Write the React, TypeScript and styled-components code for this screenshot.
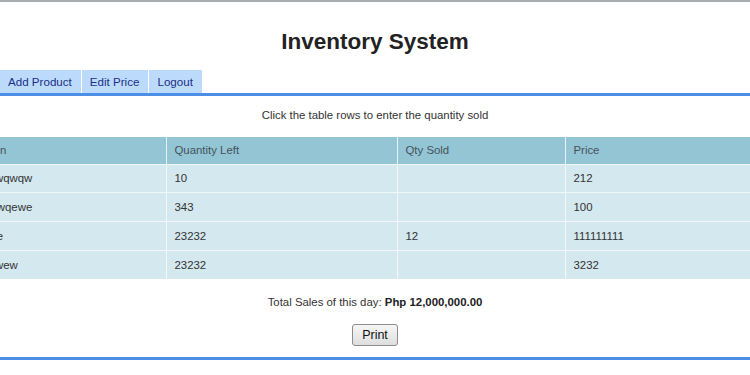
import styled, { createGlobalStyle } from "styled-components";

const GlobalStyle = createGlobalStyle`
  body {
    margin: 0;
    background: #fff;
    font-family: "Liberation Sans", Arial, sans-serif;
    color: #333;
    overflow: hidden;
  }
`;

const Page = styled.div`
  border-top: 2px solid #a9adb0;
  width: 750px;
  overflow: hidden;
`;

const Title = styled.h1`
  margin: 0;
  padding-top: 27px;
  font-size: 22.5px;
  line-height: 26px;
  font-weight: bold;
  text-align: center;
  color: #222;
`;

const Tabs = styled.nav`
  display: flex;
  gap: 1px;
  margin-top: 15px;
`;

const Tab = styled.a`
  display: block;
  padding: 0 9px 0 8px;
  height: 23px;
  line-height: 23px;
  background: #bcdbfc;
  color: #1b2f86;
  font-size: 11.6px;
  text-decoration: none;
  cursor: pointer;
`;

const Content = styled.section`
  border-top: 3px solid #4d8fe6;
  border-bottom: 3px solid #4d8fe6;
  padding: 12px 0 11px;
  text-align: center;
`;

const Note = styled.p`
  margin: 0;
  font-size: 11.4px;
  line-height: 14px;
  color: #333;
`;

const TableWrap = styled.div`
  margin-top: 15px;
  overflow: hidden;
`;

const Table = styled.table`
  margin-left: -84px;
  width: 900px;
  border-collapse: collapse;
  table-layout: fixed;
  font-size: 11.4px;
  text-align: left;
`;

const HeadCell = styled.th<{ $w?: number }>`
  box-sizing: border-box;
  width: ${(p) => (p.$w ? `${p.$w}px` : "auto")};
  height: 27px;
  padding: 0 8px;
  background: #93c5d5;
  color: #45535b;
  font-weight: normal;
  border-left: 1px solid #e6f2f6;
  white-space: nowrap;
  &:first-child {
    border-left: none;
  }
`;

const Row = styled.tr`
  cursor: pointer;
  border-top: 1px solid #f2f8fa;
`;

const Cell = styled.td`
  box-sizing: border-box;
  height: 28.7px;
  padding: 0 8px;
  background: #d4e8ef;
  color: #333;
  border-left: 1px solid #f2f8fa;
  white-space: nowrap;
  overflow: hidden;
  &:first-child {
    border-left: none;
  }
`;

const Total = styled.p`
  margin: 16px 0 0;
  font-size: 11.4px;
  line-height: 14px;
  color: #333;
  b {
    color: #222;
  }
`;

const PrintButton = styled.button`
  margin-top: 15px;
  height: 22px;
  width: 46px;
  padding: 0;
  font-family: "Liberation Sans", Arial, sans-serif;
  font-size: 12.5px;
  color: #111;
  border: 1px solid #8c8c8c;
  border-radius: 3px;
  background: linear-gradient(#f6f6f6, #dedede);
  cursor: pointer;
`;

const rows = [
  { name: "eqwqwqwqwqwqwqw", left: "10", sold: "", price: "212" },
  { name: "weqwqwqwqwwqewe", left: "343", sold: "", price: "100" },
  { name: "wqwqwqwqwqe", left: "23232", sold: "12", price: "111111111" },
  { name: "qeqwqwqwqwwew", left: "23232", sold: "", price: "3232" },
];

export default function App() {
  return (
    <Page>
      <GlobalStyle />
      <Title>Inventory System</Title>
      <Tabs>
        <Tab>Add Product</Tab>
        <Tab>Edit Price</Tab>
        <Tab>Logout</Tab>
      </Tabs>
      <Content>
        <Note>Click the table rows to enter the quantity sold</Note>
        <TableWrap>
          <Table>
            <thead>
              <tr>
                <HeadCell $w={250}>Item Description</HeadCell>
                <HeadCell $w={231}>Quantity Left</HeadCell>
                <HeadCell $w={168}>Qty Sold</HeadCell>
                <HeadCell>Price</HeadCell>
              </tr>
            </thead>
            <tbody>
              {rows.map((r, i) => (
                <Row key={i}>
                  <Cell>{r.name}</Cell>
                  <Cell>{r.left}</Cell>
                  <Cell>{r.sold}</Cell>
                  <Cell>{r.price}</Cell>
                </Row>
              ))}
            </tbody>
          </Table>
        </TableWrap>
        <Total>
          Total Sales of this day: <b>Php 12,000,000.00</b>
        </Total>
        <PrintButton>Print</PrintButton>
      </Content>
    </Page>
  );
}
